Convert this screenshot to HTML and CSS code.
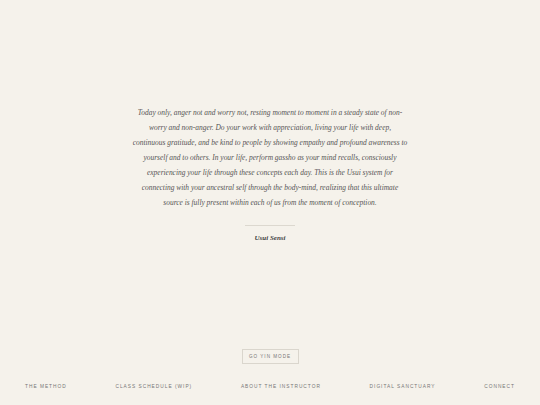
FILE: index.html
```html
<!DOCTYPE html>
<html>
<head>
<meta charset="utf-8">
<link rel="stylesheet" href="styles.css">
</head>
<body>
<div class="page">
  <main class="main">
    <blockquote class="quote">
      <p class="quote-text">Today only, anger not and worry not, resting moment to moment in a steady state of non-<br>worry and non-anger. Do your work with appreciation, living your life with deep,<br>continuous gratitude, and be kind to people by showing empathy and profound awareness to<br>yourself and to others. In your life, perform gassho as your mind recalls, consciously<br>experiencing your life through these concepts each day. This is the Usui system for<br>connecting with your ancestral self through the body-mind, realizing that this ultimate<br>source is fully present within each of us from the moment of conception.</p>
      <div class="divider"></div>
      <cite class="author">Usui Sensi</cite>
    </blockquote>
  </main>
  <footer class="footer">
    <button class="mode-btn">GO YIN MODE</button>
    <nav class="nav">
      <a class="nav-link">THE METHOD</a>
      <a class="nav-link">CLASS SCHEDULE (WIP)</a>
      <a class="nav-link">ABOUT THE INSTRUCTOR</a>
      <a class="nav-link">DIGITAL SANCTUARY</a>
      <a class="nav-link">CONNECT</a>
    </nav>
  </footer>
</div>
</body>
</html>
```
FILE: styles.css
```css
html, body {
  margin: 0;
  padding: 0;
  background: #f5f2eb;
}
.page {
  width: 540px;
  height: 405px;
  display: flex;
  flex-direction: column;
  box-sizing: border-box;
}
.main {
  flex: 1;
  display: flex;
  align-items: center;
  justify-content: center;
  padding-bottom: 2px;
}
.quote {
  margin: 0;
  display: flex;
  flex-direction: column;
  align-items: center;
}
.quote-text {
  margin: 0;
  font-family: "Liberation Serif", serif;
  font-style: italic;
  font-size: 7.45px;
  line-height: 15px;
  color: #555;
  text-align: center;
  white-space: nowrap;
}
.divider {
  width: 50px;
  height: 1px;
  background: #dcd8cf;
  margin-top: 15px;
}
.author {
  margin-top: 8px;
  font-family: "Liberation Serif", serif;
  font-style: italic;
  font-weight: bold;
  font-size: 7px;
  color: #444;
}
.footer {
  display: flex;
  flex-direction: column;
  align-items: center;
  padding-bottom: 15px;
}
.mode-btn {
  width: 57px;
  height: 15px;
  padding: 0;
  border: 1px solid #dad6cd;
  background: transparent;
  font-family: "Liberation Sans", sans-serif;
  font-size: 4.6px;
  letter-spacing: 1px;
  color: #777;
  margin-bottom: 20px;
}
.nav {
  width: 100%;
  box-sizing: border-box;
  padding: 0 25px;
  display: flex;
  justify-content: space-between;
}
.nav-link {
  font-family: "Liberation Sans", sans-serif;
  font-size: 4.8px;
  letter-spacing: 1px;
  color: #777;
  line-height: 6px;
}
```
